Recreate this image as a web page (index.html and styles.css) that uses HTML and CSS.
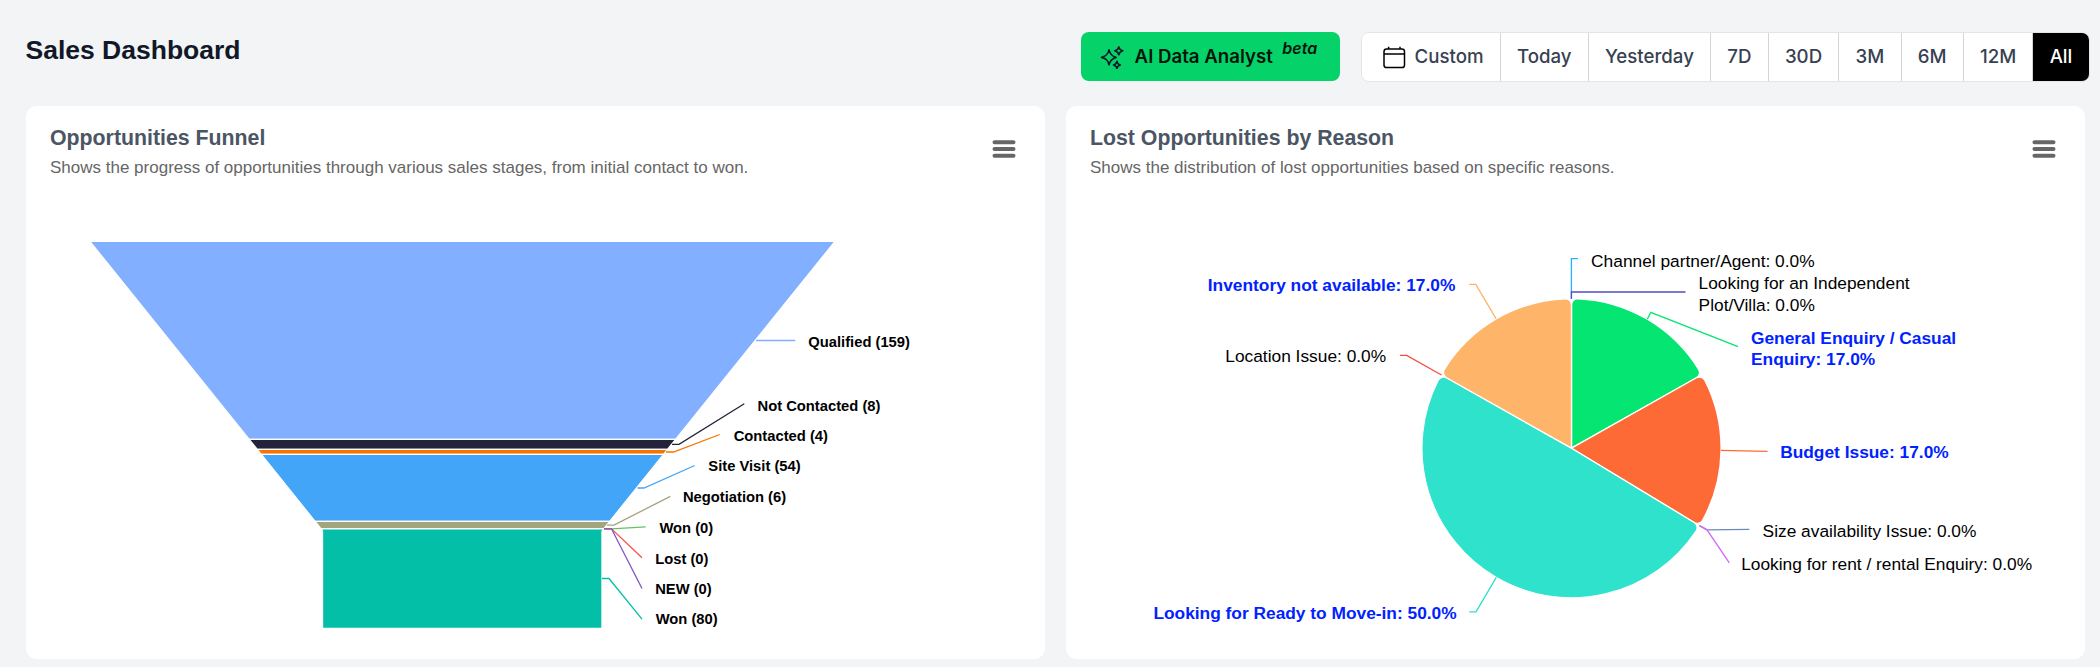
FILE: index.html
```html
<!DOCTYPE html>
<html lang="en">
<head>
<meta charset="utf-8">
<title>Sales Dashboard</title>
<link rel="stylesheet" href="styles.css">
</head>
<body>
<header class="topbar">
  <h1 class="page-title">Sales Dashboard</h1>
  <button class="ai-button">
    <svg class="ai-icon" viewBox="0 0 24 24"><path d="M9 4.9C10 9.3 11.6 11.2 16.2 12.4C11.6 13.6 10 15.4 9 19.8C8 15.4 6.4 13.6 1.6 12.4C6.4 11.2 8 9.3 9 4.9Z"/><path d="M18.8 1.8C19.3 4.1 20.3 5.3 22.8 5.8C20.3 6.4 19.3 7.5 18.8 9.8C18.3 7.5 17.3 6.4 14.8 5.8C17.3 5.3 18.3 4.1 18.8 1.8Z"/><path d="M16.9 16.4C17.3 18.5 18.2 19.5 20.3 20C18.2 20.5 17.3 21.5 16.9 23.4C16.5 21.5 15.6 20.5 13.5 20C15.6 19.5 16.5 18.5 16.9 16.4Z"/></svg>
    <span class="ai-label">AI Data Analyst</span>
    <em class="beta">beta</em>
  </button>
  <div class="ranges">
    <button class="range range-custom"><svg class="cal-icon" viewBox="0 0 24 24"><rect x="2" y="4" width="20.5" height="18.6" rx="2.6"/><path d="M2 9H22.5M6.6 1.8V4M18 1.8V4"/></svg>Custom</button>
    <button class="range">Today</button>
    <button class="range">Yesterday</button>
    <button class="range">7D</button>
    <button class="range">30D</button>
    <button class="range">3M</button>
    <button class="range">6M</button>
    <button class="range">12M</button>
    <button class="range active">All</button>
  </div>
</header>
<main class="cards">
  <section class="card">
    <div class="card-head">
      <div>
        <h2 class="card-title">Opportunities Funnel</h2>
        <p class="card-sub">Shows the progress of opportunities through various sales stages, from initial contact to won.</p>
      </div>
      <svg class="menu" viewBox="0 0 24 20"><path d="M2.5 3.3H21.5M2.5 10H21.5M2.5 16.7H21.5"/></svg>
    </div>
    <svg class="plot" viewBox="26 200 1019 459">
      <g class="shapes">
        <path fill="#82afff" d="M89.9 241.4H835L675.6 439.4H249.2Z"/>
        <path fill="#23233b" d="M249.2 439.4H675.6L667.5 449.4H257.3Z"/>
        <path fill="#f97300" d="M257.3 449.4H667.5L663.5 454.4H261.3Z"/>
        <path fill="#42a5f8" d="M261.3 454.4H663.5L609.7 521.4H315.1Z"/>
        <path fill="#a4a47e" d="M315.1 521.4H609.7L603.7 528.9H321.1Z"/>
        <path fill="#04bfa8" d="M321.1 528.9H603.7L602 531.3V628.3H322.5V531.3Z"/>
      </g>
      <g class="links">
        <path stroke="#82afff" d="M756 340.5H795.3"/>
        <path stroke="#23233b" d="M672 444.3H679L744.3 403.7"/>
        <path stroke="#f97300" d="M666 452H673.5L719.7 434.5"/>
        <path stroke="#42a5f8" d="M637.5 488H644L694.7 465.5"/>
        <path stroke="#a4a47e" d="M607 525.2H614L670.3 496.3"/>
        <path stroke="#63c463" d="M604 528.8H611.5L645.7 526.8"/>
        <path stroke="#f8544c" d="M604 528.8H611.5L642 557.7"/>
        <path stroke="#7e57c8" d="M604 528.8H611.5L642 588.5"/>
        <path stroke="#04bfa8" d="M602 578.5H609L642 619.2"/>
      </g>
      <g class="funnel-labels">
        <text x="808.3" y="346.5">Qualified (159)</text>
        <text x="757.5" y="410.8">Not Contacted (8)</text>
        <text x="733.7" y="441">Contacted (4)</text>
        <text x="708.3" y="471.3">Site Visit (54)</text>
        <text x="682.9" y="502.2">Negotiation (6)</text>
        <text x="659.4" y="532.8">Won (0)</text>
        <text x="655.2" y="563.6">Lost (0)</text>
        <text x="655.2" y="593.6">NEW (0)</text>
        <text x="655.7" y="624.3">Won (80)</text>
      </g>
    </svg>
  </section>
  <section class="card">
    <div class="card-head">
      <div>
        <h2 class="card-title">Lost Opportunities by Reason</h2>
        <p class="card-sub">Shows the distribution of lost opportunities based on specific reasons.</p>
      </div>
      <svg class="menu" viewBox="0 0 24 20"><path d="M2.5 3.3H21.5M2.5 10H21.5M2.5 16.7H21.5"/></svg>
    </div>
    <svg class="plot" viewBox="1066 200 1019 459">
      <defs>
        <path id="slice" d="M0 0V-142.87A6 6 0 0 1 6.25 -148.87A149 149 0 0 1 126.62 -78.53A6 6 0 0 1 124.47 -70.13Z"/>
      </defs>
      <g class="shapes" transform="translate(1571.5 448.2) scale(1.004)">
        <use href="#slice" fill="#04e572"/>
        <use href="#slice" fill="#fe6a35" transform="rotate(60.6)"/>
        <path fill="#2fe2cc" transform="rotate(121.2)" d="M0 0V-142.87A6 6 0 0 1 6.25 -148.87A149 149 0 0 1 10.93 148.6A6 6 0 0 1 4.49 142.8Z"/>
        <use href="#slice" fill="#feb56a" transform="rotate(299.4)"/>
      </g>
      <g class="links">
        <path stroke="#2caffe" d="M1571.4 298.7V258.7H1578"/>
        <path stroke="#544fc5" d="M1571.4 298.7V292H1685.5"/>
        <path stroke="#04e572" d="M1647.3 319.3L1650.8 312.3L1738 346.6"/>
        <path stroke="#fe6a35" d="M1721 450.3L1767.5 451.3"/>
        <path stroke="#6b8abc" d="M1699.5 525.7L1707 529.8L1749.3 529.4"/>
        <path stroke="#d568fb" d="M1699.5 525.7L1707 529.8L1729.3 562.8"/>
        <path stroke="#2ee0ca" d="M1496.3 577.3L1476 611.8H1469.3"/>
        <path stroke="#fa4b42" d="M1441.5 375L1406.7 355.3H1400"/>
        <path stroke="#feb56a" d="M1496 318.7L1475.8 284.4H1469.3"/>
      </g>
      <g class="pie-labels">
        <text x="1591.1" y="266.7">Channel partner/Agent: 0.0%</text>
        <text x="1698.6" y="289.3">Looking for an Independent</text>
        <text x="1698.6" y="311">Plot/Villa: 0.0%</text>
        <text class="hit" x="1751" y="344">General Enquiry / Casual</text>
        <text class="hit" x="1751" y="364.8">Enquiry: 17.0%</text>
        <text class="hit" x="1780.2" y="458">Budget Issue: 17.0%</text>
        <text x="1762.6" y="537.2">Size availability Issue: 0.0%</text>
        <text x="1741.2" y="570.3">Looking for rent / rental Enquiry: 0.0%</text>
        <text class="hit" x="1153.4" y="619">Looking for Ready to Move-in: 50.0%</text>
        <text x="1225.3" y="362.4">Location Issue: 0.0%</text>
        <text class="hit" x="1207.8" y="291.4">Inventory not available: 17.0%</text>
      </g>
    </svg>
  </section>
</main>
</body>
</html>
```
FILE: styles.css
```css
* { box-sizing: border-box; margin: 0; padding: 0; }
body {
  width: 2100px;
  height: 667px;
  overflow: hidden;
  background: #f3f4f6;
  font-family: "Liberation Sans", Arial, sans-serif;
}
.topbar {
  display: flex;
  align-items: center;
  height: 106px;
  padding: 7px 10.5px 0 25.5px;
}
.page-title {
  margin: 0 auto 13px 0;
  font-size: 26.5px;
  line-height: 32px;
  color: #111827;
}
button { font: 500 18.67px/24px Inter, sans-serif; border: 0; }
.ai-button {
  display: flex;
  align-items: center;
  width: 259px;
  height: 49px;
  margin-right: 21px;
  padding-left: 19.5px;
  border-radius: 8px;
  background: #05d268;
  color: #03140b;
  font-weight: 600;
}
.ai-icon { width: 24px; height: 24px; margin-right: 10.5px; fill: none; stroke: #111827; stroke-width: 1.6; stroke-linejoin: round; }
.ai-label { white-space: nowrap; }
.beta { margin: -17px 0 0 9.5px; font-size: 16px; font-style: italic; }
.ranges {
  display: flex;
  height: 50px;
  border: 1px solid #e2e5ea;
  border-radius: 8px;
  background: #fff;
  overflow: hidden;
}
.range {
  display: flex;
  align-items: center;
  padding: 0 16.22px;
  background: #fff;
  color: #374151;
  border-right: 1px solid #d1d5db;
}
.range-custom { padding-left: 20px; }
.range.active { background: #000; color: #fff; border: 0; }
.cal-icon { width: 24px; height: 24px; margin-right: 9px; fill: none; stroke: #000; stroke-width: 1.5; }
.cards { display: flex; gap: 21px; padding-left: 26px; }
.card {
  display: flex;
  flex-direction: column;
  width: 1019px;
  height: 553px;
  border-radius: 11px;
  background: #fff;
  overflow: hidden;
}
.card-head {
  display: flex;
  justify-content: space-between;
  height: 94px;
  padding: 20px 29px 0 24px;
}
.card-title { font-size: 21.3px; line-height: 24px; color: #4b5563; }
.card-sub { margin-top: 8px; font-size: 17.01px; line-height: 20px; color: #666; }
.menu { width: 24px; height: 20px; margin-top: 13px; fill: none; stroke: #666; stroke-width: 4; stroke-linecap: round; }
.plot { display: block; width: 1019px; height: 459px; }
.shapes { stroke: #fff; stroke-width: 1.33; stroke-linejoin: round; }
.links { fill: none; stroke-width: 1.33; }
.funnel-labels { font-size: 14.75px; font-weight: 700; fill: #000; }
.pie-labels { font-size: 17.33px; fill: #000; }
.pie-labels .hit { font-weight: 700; fill: #0022ff; }
```
